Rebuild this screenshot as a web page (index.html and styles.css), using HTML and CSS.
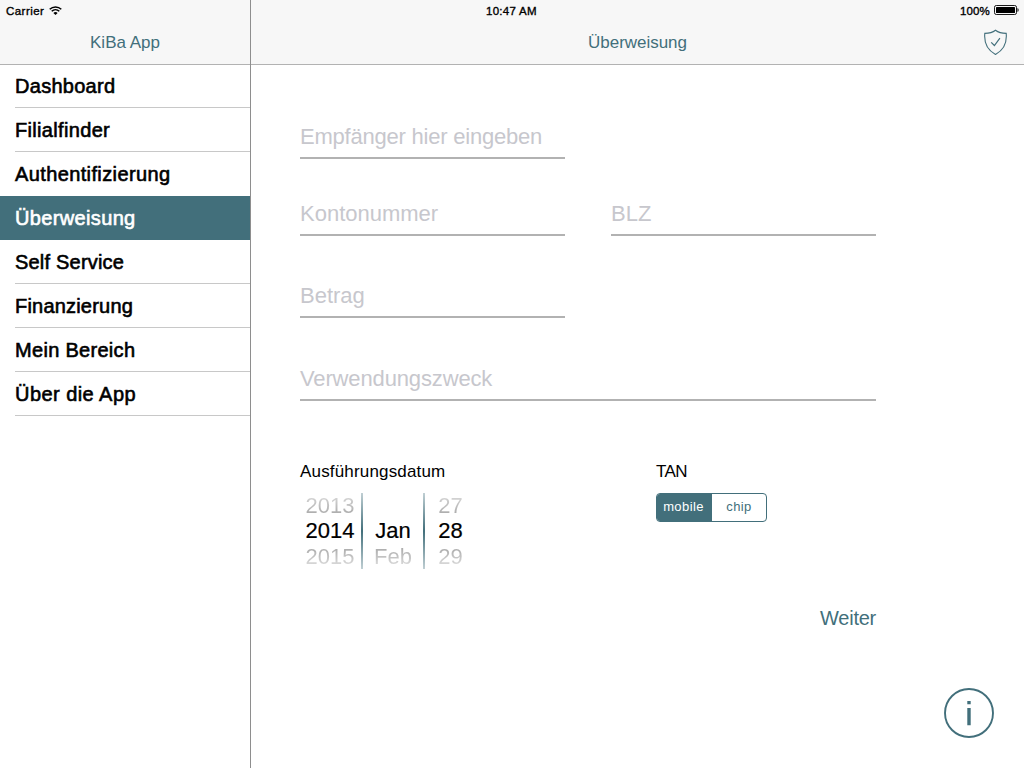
FILE: index.html
```html
<!DOCTYPE html>
<html lang="de">
<head>
<meta charset="utf-8">
<title>KiBa App</title>
<link rel="stylesheet" href="styles.css">
</head>
<body>
<div class="app">
  <aside class="sidebar">
    <header class="bar">
      <div class="status">
        <span class="carrier">Carrier</span>
        <svg class="wifi" width="13" height="9" viewBox="0 0 13 9"><g fill="none" stroke="#000" stroke-width="1.5"><path d="M.7 3.3C4 .1 9 .1 12.3 3.3"/><path d="M2.7 5.3c2.2-2.1 5.4-2.1 7.6 0"/></g><path d="M6.5 9 4.4 6.900c1.200-1.100 3-1.100 4.200 0z"/></svg>
      </div>
      <h1 class="title title-app"><span>KiBa App</span></h1>
    </header>
    <nav class="menu">
      <a class="item"><span class="m1">Dashboard</span></a>
      <a class="item"><span class="m2">Filialfinder</span></a>
      <a class="item before-active"><span class="m3">Authentifizierung</span></a>
      <a class="item active"><span class="m4">Überweisung</span></a>
      <a class="item"><span class="m5">Self Service</span></a>
      <a class="item"><span class="m6">Finanzierung</span></a>
      <a class="item"><span class="m7">Mein Bereich</span></a>
      <a class="item"><span class="m8">Über die App</span></a>
    </nav>
  </aside>
  <main class="detail">
    <header class="bar">
      <div class="status status-right">
        <span class="clock">10:47 AM</span>
        <span class="percent">100%</span>
        <svg class="battery" width="25" height="10" viewBox="0 0 25 10"><rect x=".5" y=".5" width="22" height="9" rx="1.8" fill="none" stroke="#000" stroke-width=".9"/><rect x="2" y="2" width="19" height="6" rx=".6"/><path d="M23.5 3c1.500.6 1.500 3.400 0 4z"/></svg>
      </div>
      <div class="titlebar">
        <h1 class="title title-page"><span>Überweisung</span></h1>
        <svg class="shield" width="24" height="27" viewBox="0 0 24 27"><g fill="none" stroke="#426f7b" stroke-width="1.1"><path d="M12.500 1.200C10 3.100 6 4.300 1.800 4.400C1 13 3 20.500 12.500 25.400C22 20.500 24 13 23.200 4.400C19 4.300 15 3.100 12.500 1.200Z"/><path d="M8.200 13.400 11.400 16.500 16.900 9.200" stroke-width="1.2"/></g></svg>
      </div>
    </header>
    <form class="form">
      <div class="field recipient"><span class="f1">Empfänger hier eingeben</span></div>
      <div class="pair">
        <div class="field"><span class="f2">Kontonummer</span></div>
        <div class="field"><span class="f3">BLZ</span></div>
      </div>
      <div class="field amount"><span class="f4">Betrag</span></div>
      <div class="field purpose"><span class="f5">Verwendungszweck</span></div>
      <div class="options">
        <section class="date">
          <div class="label"><span class="l1">Ausführungsdatum</span></div>
          <div class="picker">
            <div class="wheel year"><span class="dim top">2013</span><span class="current">2014</span><span class="dim low">2015</span></div>
            <div class="wheel month"><span class="dim"></span><span class="current">Jan</span><span class="dim low">Feb</span></div>
            <div class="wheel day"><span class="dim top">27</span><span class="current">28</span><span class="dim low">29</span></div>
          </div>
        </section>
        <section class="tan">
          <div class="label"><span class="l2">TAN</span></div>
          <div class="segments"><span class="seg on">mobile</span><span class="seg">chip</span></div>
        </section>
      </div>
      <div class="next"><span>Weiter</span></div>
    </form>
    <footer class="footer">
      <svg class="info" width="50" height="50" viewBox="0 0 50 50"><circle cx="25" cy="25" r="24" fill="none" stroke="#426f7b" stroke-width="1.900"/><path fill="#426f7b" d="M23.300 13h3.400v3.200h-3.400zM23.300 20h3.400v17.300h-3.400z"/></svg>
    </footer>
  </main>
</div>
</body>
</html>
```
FILE: styles.css
```css
* { box-sizing: border-box; }
body { margin: 0; background: #fff; color: #000; font-family: "Liberation Sans", Arial, sans-serif; }
span { white-space: nowrap; }
.app { display: flex; width: 1024px; height: 768px; overflow: hidden; }
.sidebar { width: 251px; border-right: 1px solid #8e8e8e; }
.detail { width: 773px; display: flex; flex-direction: column; }
.bar { height: 65px; background: #f7f7f7; border-bottom: 1px solid #b2b2b2; }

.status { display: flex; align-items: center; height: 22px; font-size: 11.5px; padding-left: 6px; -webkit-text-stroke: .35px #000; }
.wifi { margin: 0 0 1px 5px; }
.carrier { letter-spacing: .45px; }
.clock { letter-spacing: .28px; }
.status-right { padding: 0 5px 0 235px; }
.percent { margin-left: auto; letter-spacing: .15px; }
.battery { margin-left: 4px; margin-top: -2px; }
.title { margin: 0; font-size: 17px; font-weight: 400; color: #426f7b; line-height: 42px; text-align: center; }
.titlebar { display: flex; align-items: center; height: 40px; padding-right: 17px; }
.title-page { flex: 1; padding-left: 41px; padding-top: 1px; letter-spacing: -.03px; }
.shield { flex: none; }

.item { display: flex; align-items: center; height: 44px; margin-left: 15px; border-bottom: 1px solid #c8c8c8; font-size: 20px; -webkit-text-stroke: .6px currentColor; padding-top: 1px; }
.item:first-child { height: 43px; padding-top: 0; }
.before-active { border-bottom-color: transparent; }
.item.active { margin-left: 0; padding-left: 15px; background: #426f7b; color: #fff; border-bottom-color: #426f7b; }
.m1 { letter-spacing: .28px; }
.m2 { letter-spacing: .33px; }
.m3 { letter-spacing: .38px; }
.m4 { letter-spacing: .35px; }
.m5 { letter-spacing: .2px; }
.m6 { letter-spacing: .2px; }
.m7 { letter-spacing: .3px; }
.m8 { letter-spacing: .45px; }

.form { padding-left: 49px; }
.field { width: 265px; height: 43px; border-bottom: 2px solid #b2b2b2; color: #c7c7cd; font-size: 22px; line-height: 41px; }
.f1 { letter-spacing: -.22px; }
.f5 { letter-spacing: -.14px; }
.recipient { margin-top: 51px; }
.pair { display: flex; gap: 46px; margin-top: 34px; }
.amount { margin-top: 39px; }
.purpose { width: 576px; margin-top: 40px; }
.options { display: flex; margin-top: 60px; }
.date { width: 356px; }
.label { height: 20px; line-height: 22px; font-size: 17px; }
.l1 { letter-spacing: .17px; }
.l2 { letter-spacing: -.6px; }
.picker { display: flex; width: 176px; height: 76px; margin-top: 12px; }
.wheel { flex: none; display: flex; flex-direction: column; font-size: 22px; line-height: 25px; text-align: center; border-right: 2px solid transparent; }
.wheel span { height: 25px; }
.current { -webkit-text-stroke: .2px #000; }
.year { width: 63px; padding-left: 1px; padding-right: 2px; border-image: linear-gradient(#c4d2d6, #426f7b 50%, #c4d2d6) 1; }
.month { width: 62px; border-image: linear-gradient(#c4d2d6, #426f7b 50%, #c4d2d6) 1; }
.day { width: 53px; }
.dim { color: transparent; background: linear-gradient(#d2d2d2 20%, #a8a8a8 90%); -webkit-background-clip: text; background-clip: text; }
.dim.low { line-height: 27px; background-image: linear-gradient(#a8a8a8 15%, #dadada 90%); }
.segments { display: flex; width: 111px; height: 29px; margin-top: 12px; border: 1px solid #426f7b; border-radius: 4px; overflow: hidden; }
.seg { flex: 1; text-align: center; font-size: 13px; line-height: 26px; color: #426f7b; letter-spacing: .4px; }
.seg.on { background: #426f7b; color: #fff; flex: 0 0 55px; padding-right: 2px; }
.next { width: 576px; margin-top: 37px; text-align: right; font-size: 20px; line-height: 24px; color: #426f7b; letter-spacing: -.25px; }
.footer { margin-top: auto; padding: 0 30px 30px; display: flex; justify-content: flex-end; }
.info { display: block; }
```
